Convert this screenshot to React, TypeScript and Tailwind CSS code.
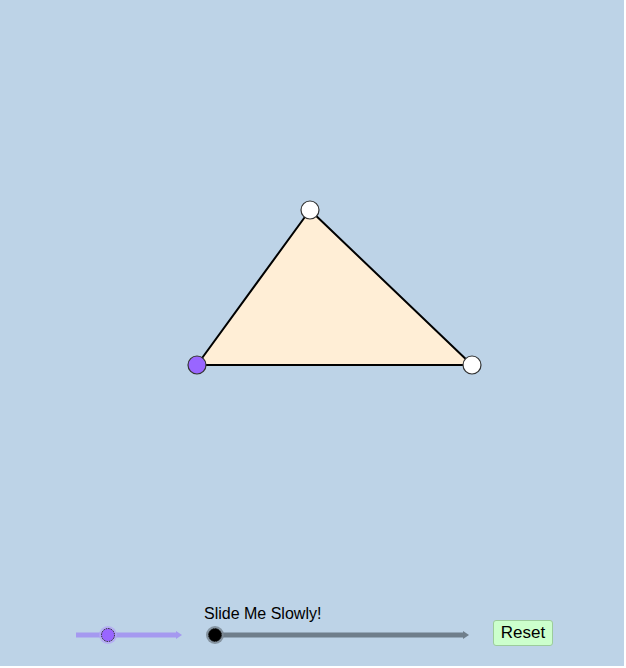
import React from "react";

export default function App() {
  return (
    <div className="w-[626px] h-[668px] bg-white">
      <div
        className="relative w-[624px] h-[666px] bg-[#bdd3e7] overflow-hidden"
        style={{ fontFamily: '"Liberation Sans", Arial, sans-serif' }}
      >
        <svg className="absolute left-0 top-0" width="624" height="666" viewBox="0 0 624 666">
          <polygon points="310,210 197,365 472,365" fill="#ffeed6" stroke="#000" strokeWidth="2" strokeLinejoin="round" />
          <circle cx="310" cy="210" r="9" fill="#fff" stroke="#333" strokeWidth="1.2" />
          <circle cx="472" cy="365" r="9" fill="#fff" stroke="#333" strokeWidth="1.2" />
          <circle cx="197" cy="365" r="9" fill="#9966ff" stroke="#333" strokeWidth="1.2" />

          {/* left slider */}
          <line x1="76" y1="635" x2="177" y2="635" stroke="#a599f0" strokeWidth="5" />
          <polygon points="176,631 182,635 176,639" fill="#a599f0" />
          <circle cx="108" cy="635" r="9" fill="#b3a6f5" opacity="0.8" />
          <circle cx="108" cy="635" r="6.5" fill="#9966ff" stroke="#222" strokeWidth="1" strokeDasharray="1.5 1" />

          {/* right slider */}
          <line x1="215" y1="635" x2="464" y2="635" stroke="#6f7e8b" strokeWidth="5" />
          <polygon points="463,631 469,635 463,639" fill="#6f7e8b" />
          <circle cx="215" cy="635" r="9" fill="#7b8894" opacity="0.85" />
          <circle cx="215" cy="635" r="6.5" fill="#000" stroke="#222" strokeWidth="1" strokeDasharray="1.5 1" />
        </svg>

        <div className="absolute left-[204px] top-[604px] text-[16px] leading-[20px] text-black">
          Slide Me Slowly!
        </div>

        <button className="absolute left-[493px] top-[620px] w-[60px] h-[26px] bg-[#ccffcc] border border-[#9ccc9c] rounded-[3px] text-[17px] leading-[24px] text-black text-center">
          Reset
        </button>
      </div>
    </div>
  );
}
